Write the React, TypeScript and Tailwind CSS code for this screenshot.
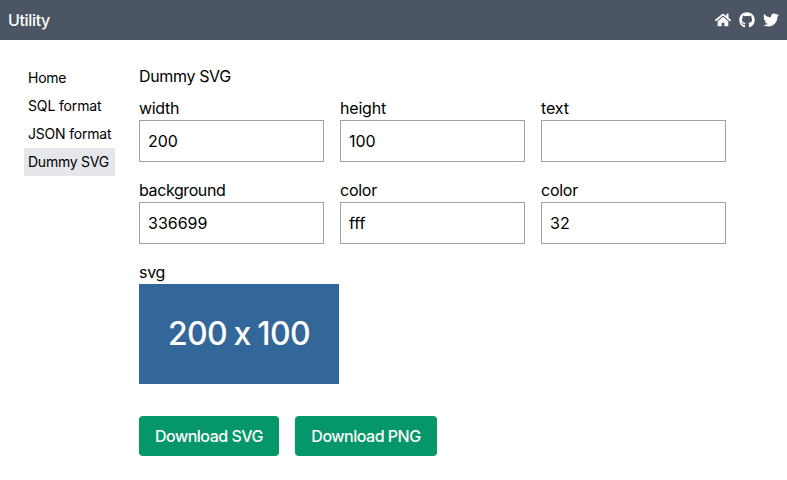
import React from "react";
import { FaHome, FaGithub, FaTwitter } from "react-icons/fa";

const menu = [
  { label: "Home", spacing: "tracking-[-0.25px]" },
  { label: "SQL format", spacing: "tracking-[-0.15px]" },
  { label: "JSON format", spacing: "tracking-[-0.2px]" },
  { label: "Dummy SVG", spacing: "tracking-[-0.25px]", active: true },
];

const fields = [
  { label: "width", value: "200", spacing: "tracking-[-0.3px]" },
  { label: "height", value: "100", spacing: "tracking-[-0.2px]" },
  { label: "text", value: "", spacing: "tracking-[-0.1px]" },
  { label: "background", value: "336699", spacing: "tracking-[-0.4px]" },
  { label: "color", value: "fff", spacing: "tracking-[-0.25px]" },
  { label: "color", value: "32", spacing: "tracking-[-0.25px]" },
];

const buttonClass = "h-10 rounded bg-[#059669] text-center font-[450] tracking-[-0.5px] whitespace-nowrap";

export default function App() {
  return (
    <div className="min-h-screen bg-white font-['Inter',sans-serif] text-base text-black">
      <header className="flex h-10 items-center justify-between bg-[#4b5563] px-2 text-white">
        <span className="font-[450] tracking-[-0.35px]">Utility</span>
        <nav className="flex gap-2">
          <FaHome size={16} />
          <FaGithub size={16} />
          <FaTwitter size={16} />
        </nav>
      </header>
      <div className="flex gap-6 px-6 pt-6">
        <aside className="w-[91px] shrink-0 text-sm">
          {menu.map((m) => (
            <div key={m.label} className={`h-7 px-1 leading-7 whitespace-nowrap ${m.spacing} ${m.active ? "bg-[#e5e7eb]" : ""}`}>
              {m.label}
            </div>
          ))}
        </aside>
        <main>
          <h1 className="h-6 tracking-[-0.35px]">Dummy SVG</h1>
          <div className="mt-2 grid grid-cols-[185px_185px_185px] gap-4">
            {fields.map((f, i) => (
              <label key={i} className="block h-[66px]">
                <span className={`block h-6 ${f.spacing}`}>{f.label}</span>
                <input
                  className="block h-[42px] w-full border border-[#9ca3af] px-2 outline-none"
                  defaultValue={f.value}
                />
              </label>
            ))}
          </div>
          <div className="mt-4 h-6 tracking-[-0.3px]">svg</div>
          <div className="flex h-[100px] w-[200px] items-center justify-center bg-[#336699] text-[32px] font-[450] tracking-[-0.6px] [word-spacing:-1.5px] text-white [font-feature-settings:'calt'_0]">
            200 x 100
          </div>
          <div className="mt-8 flex gap-4 text-white">
            <button className={`w-[140px] ${buttonClass}`}>Download SVG</button>
            <button className={`w-[142px] ${buttonClass}`}>Download PNG</button>
          </div>
        </main>
      </div>
    </div>
  );
}
